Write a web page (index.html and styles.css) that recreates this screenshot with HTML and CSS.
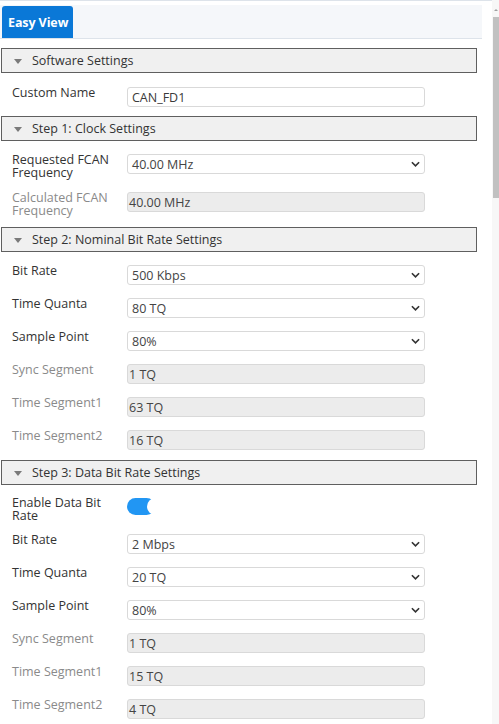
FILE: index.html
```html
<!DOCTYPE html>
<html>
<head>
<meta charset="utf-8">
<link rel="stylesheet" href="styles.css">
</head>
<body>
<div class="app">
  <div class="content">
    <div class="topline"></div>
    <div class="tabbar">
      <div class="tab">Easy View</div>
    </div>

    <div class="section">
      <div class="sec-head"><span class="tri"></span>Software Settings</div>
      <div class="sec-body first">
        <div class="row"><div class="label">Custom Name</div><div class="input">CAN_FD1</div></div>
      </div>
    </div>

    <div class="section">
      <div class="sec-head"><span class="tri"></span>Step 1: Clock Settings</div>
      <div class="sec-body">
        <div class="row"><div class="label">Requested FCAN Frequency</div><div class="input select">40.00 MHz<svg class="chev" viewBox="0 0 10 6"><path d="M1 1l4 4 4-4"/></svg></div></div>
        <div class="row"><div class="label dim">Calculated FCAN Frequency</div><div class="input disabled">40.00 MHz</div></div>
      </div>
    </div>

    <div class="section">
      <div class="sec-head"><span class="tri"></span>Step 2: Nominal Bit Rate Settings</div>
      <div class="sec-body">
        <div class="row"><div class="label">Bit Rate</div><div class="input select">500 Kbps<svg class="chev" viewBox="0 0 10 6"><path d="M1 1l4 4 4-4"/></svg></div></div>
        <div class="row"><div class="label">Time Quanta</div><div class="input select">80 TQ<svg class="chev" viewBox="0 0 10 6"><path d="M1 1l4 4 4-4"/></svg></div></div>
        <div class="row"><div class="label">Sample Point</div><div class="input select">80%<svg class="chev" viewBox="0 0 10 6"><path d="M1 1l4 4 4-4"/></svg></div></div>
        <div class="row"><div class="label dim">Sync Segment</div><div class="input disabled">1 TQ</div></div>
        <div class="row"><div class="label dim">Time Segment1</div><div class="input disabled">63 TQ</div></div>
        <div class="row"><div class="label dim">Time Segment2</div><div class="input disabled">16 TQ</div></div>
      </div>
    </div>

    <div class="section">
      <div class="sec-head"><span class="tri"></span>Step 3: Data Bit Rate Settings</div>
      <div class="sec-body tight-top">
        <div class="row row-tight"><div class="label">Enable Data Bit Rate</div><div class="toggle"><span class="knob"></span></div></div>
        <div class="row"><div class="label">Bit Rate</div><div class="input select">2 Mbps<svg class="chev" viewBox="0 0 10 6"><path d="M1 1l4 4 4-4"/></svg></div></div>
        <div class="row"><div class="label">Time Quanta</div><div class="input select">20 TQ<svg class="chev" viewBox="0 0 10 6"><path d="M1 1l4 4 4-4"/></svg></div></div>
        <div class="row"><div class="label">Sample Point</div><div class="input select">80%<svg class="chev" viewBox="0 0 10 6"><path d="M1 1l4 4 4-4"/></svg></div></div>
        <div class="row"><div class="label dim">Sync Segment</div><div class="input disabled">1 TQ</div></div>
        <div class="row"><div class="label dim">Time Segment1</div><div class="input disabled">15 TQ</div></div>
        <div class="row"><div class="label dim">Time Segment2</div><div class="input disabled">4 TQ</div></div>
      </div>
    </div>
  </div>
  <div class="scrollbar">
    <div class="arrow"></div>
    <div class="thumb"></div>
  </div>
</div>
</body>
</html>
```

FILE: styles.css
```css
* { box-sizing: border-box; }
html, body { margin: 0; padding: 0; background: #fff; }
body {
  font-family: "Open Sans", "Noto Sans", sans-serif;
  font-size: 12px;
  color: #333;
  overflow: hidden;
  height: 724px;
}
.app { display: flex; width: 499px; height: 724px; }
.content { width: 492px; flex: none; }
.topline { height: 1px; background: #dde3ea; }
.tabbar {
  margin-top: 4px;
  width: 482px;
  height: 34px;
  background: #f5f7fa;
  border-bottom: 1px solid #dde3ea;
  padding: 1px 0 0 2px;
  display: flex;
}
.tab {
  width: 71px;
  height: 32px;
  background: #0a78d7;
  color: #fff;
  font-weight: 700;
  font-size: 12.5px;
  letter-spacing: -0.1px;
  border-radius: 3px 3px 0 0;
  padding-left: 6px;
  display: flex;
  align-items: center;
}
.section { margin-left: 1px; width: 476px; }
.tabbar + .section { margin-top: 9px; }
.sec-head {
  height: 25px;
  border: 1px solid #5f5f5f;
  background: #f0f0f0;
  display: flex;
  align-items: center;
  font-size: 12.5px;
  color: #333;
  padding-left: 12px;
}
.tri {
  width: 0; height: 0;
  border-left: 4px solid transparent;
  border-right: 4px solid transparent;
  border-top: 5px solid #7a7a7a;
  margin-right: 10px;
  margin-top: 1px;
}
.sec-body {
  padding: 13px 0 10px 11px;
  display: flex;
  flex-direction: column;
  gap: 13px;
}
.sec-body.first { padding-top: 14px; padding-bottom: 9px; }
.sec-body.tight-top { padding-top: 12px; }
.row { display: flex; align-items: flex-start; }
.row-tight { margin-bottom: -1px; }
.label {
  width: 115px;
  flex: none;
  line-height: 12.5px;
  padding-right: 8px;
  font-size: 12.5px;
  color: #333;
}
.label.dim { color: #8a8a8a; }
.input {
  width: 298px;
  height: 20px;
  border: 1px solid #d9d9d9;
  border-radius: 3px;
  background: #fff;
  display: flex;
  align-items: center;
  padding-left: 4px;
  font-size: 12.5px;
  color: #3a3a3a;
}
.input.select { padding-left: 4px; color: #444; }
.input.disabled { background: #ececec; padding-left: 1px; color: #444; }
.chev {
  width: 9px; height: 6px;
  margin-left: auto;
  margin-right: 4px;
  fill: none;
  stroke: #333;
  stroke-width: 1.8;
}
.toggle {
  position: relative;
  width: 28px;
  height: 17px;
  margin-top: 1px;
  background: #2196f3;
  border-radius: 9px;
}
.knob {
  position: absolute;
  left: 20px;
  top: 0;
  width: 17px;
  height: 17px;
  border-radius: 50%;
  background: #fff;
}
.scrollbar {
  width: 7px;
  background: #f7f7f7;
  position: relative;
  padding-top: 17px;
}
.arrow {
  position: absolute;
  top: 9px;
  left: 2px;
  width: 0; height: 0;
  border-left: 2px solid transparent;
  border-right: 2px solid transparent;
  border-bottom: 2px solid #a0a0a0;
}
.thumb {
  margin-left: 1px;
  width: 6px;
  height: 181px;
  background: #c1c1c1;
}
```
